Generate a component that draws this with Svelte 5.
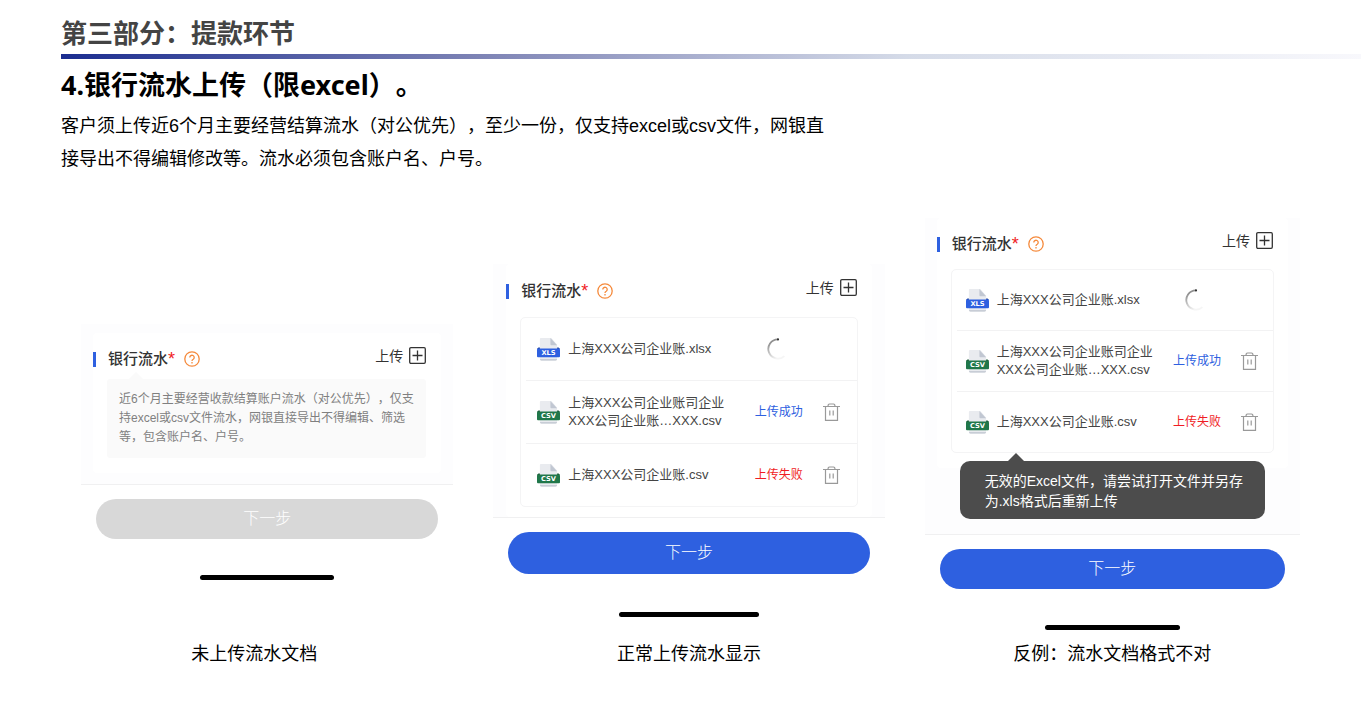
<script lang="ts">
	interface UploadFile {
		name: string;
		type: 'xls' | 'csv';
		status: 'loading' | 'success' | 'fail';
	}

	interface Screen {
		id: string;
		caption: string;
		files: UploadFile[];
		hint?: string;
		error?: string;
	}

	const files: UploadFile[] = [
		{ name: '上海XXX公司企业账.xlsx', type: 'xls', status: 'loading' },
		{ name: '上海XXX公司企业账司企业XXX公司企业账…XXX.csv', type: 'csv', status: 'success' },
		{ name: '上海XXX公司企业账.csv', type: 'csv', status: 'fail' }
	];

	const screens: Screen[] = [
		{
			id: 'empty',
			caption: '未上传流水文档',
			files: [],
			hint: '近6个月主要经营收款结算账户流水（对公优先），仅支持excel或csv文件流水，网银直接导出不得编辑、筛选等，包含账户名、户号。'
		},
		{ id: 'normal', caption: '正常上传流水显示', files },
		{
			id: 'invalid',
			caption: '反例：流水文档格式不对',
			files,
			error: '无效的Excel文件，请尝试打开文件并另存为.xls格式后重新上传'
		}
	];
</script>

{#snippet fileIcon(type: string)}
	<svg class="file-icon" viewBox="0 0 24 24" aria-hidden="true">
		<path d="M4 0h11l6 7v15q0 2-2 2H5q-2 0-2-2V1q0-1 1-1z" fill="#e9ebef" />
		<path d="M14 0l7 7.5h-6q-1 0-1-1z" fill="#c1c7d2" />
		<path d="M3 22q0 1.5 1.5 1.5h15Q21 23.500 21 22z" fill="#c8cdd6" />
		<path d="M1.500 10L0 11.500h3V10zM22.500 10l1.500 1.500h-3V10z" fill={type === 'xls' ? '#1d419f' : '#14532f'} />
		<rect y="11" width="24" height="9" rx="1" fill={type === 'xls' ? '#2e60e0' : '#20774a'} />
		<text x="12" y="18" text-anchor="middle" fill="#fff">{type.toUpperCase()}</text>
	</svg>
{/snippet}

{#snippet spinner(id: string)}
	<svg class="spinner" viewBox="0 0 24 24" role="img" aria-label="上传中">
		<defs>
			<linearGradient id="spin-{id}" x1="0" y1="0" x2="0.500" y2="1">
				<stop offset="0" stop-color="#777" />
				<stop offset="0.500" stop-color="#bbb" />
				<stop offset="1" stop-color="#f5f5f5" />
			</linearGradient>
		</defs>
		<path d="M12 1.500A10.500 10.500 0 1 0 19 19.800" fill="none" stroke="url(#spin-{id})" stroke-width="2" />
		<circle cx="12" cy="1.500" r="1.200" fill="#333" />
	</svg>
{/snippet}

<header>
	<h2>第三部分：提款环节</h2>
</header>

<main>
	<section class="intro">
		<h1>4.银行流水上传（限excel）。</h1>
		<p>
			客户须上传近6个月主要经营结算流水（对公优先），至少一份，仅支持excel或csv文件，网银直<br />接导出不得编辑修改等。流水必须包含账户名、户号。
		</p>
	</section>

	<section class="gallery">
		{#each screens as screen}
			<figure class={screen.id}>
				<div class="screen">
					<div class="card">
						<div class="card-head">
							<div class="title">
								<span class="mark"></span>
								<span>银行流水</span>
								<span class="required">*</span>
								<button class="help" aria-label="说明">
									<svg viewBox="0 0 16 16" fill="none" stroke="#f58a3c">
										<circle cx="8" cy="8" r="7.200" stroke-width="1.300" />
										<path d="M5.800 6.500a2.200 2.200 0 1 1 3.400 1.800q-1.200.7-1.200 1.700" stroke-width="1.300" />
										<path d="M8 11v1.400" stroke-width="1.300" />
									</svg>
								</button>
							</div>
							<button class="upload">
								上传
								<svg viewBox="0 0 17 17" fill="none" stroke="#333" aria-hidden="true">
									<rect x="0.700" y="0.700" width="15.600" height="15.600" rx="1.200" stroke-width="1.300" />
									<path d="M3.500 8.500h10M8.500 3.500v10" stroke-width="1.300" />
								</svg>
							</button>
						</div>

						{#if screen.hint}
							<p class="hint">{screen.hint}</p>
						{/if}

						{#if screen.files.length}
							<ul class="files">
								{#each screen.files as file}
									<li>
										{@render fileIcon(file.type)}
										<span class="name">{file.name}</span>
										<span class="status {file.status}">
											{#if file.status === 'loading'}
												{@render spinner(screen.id)}
											{:else}
												{file.status === 'success' ? '上传成功' : '上传失败'}
											{/if}
										</span>
										{#if file.status !== 'loading'}
											<button class="remove" aria-label="删除">
												<svg viewBox="0 0 17 18" fill="none" stroke="#999" stroke-width="1.200">
													<path d="M0 3.500h17M5 3.500q0-2.500 1.500-2.500h4q1.500 0 1.500 2.500M2.500 3.500v13.800h12V3.500" />
													<path d="M6.800 7.500v5M10.200 7.500v5" />
												</svg>
											</button>
										{/if}
									</li>
								{/each}
							</ul>
						{/if}

						{#if screen.error}
							<div class="tooltip" role="alert">{screen.error}</div>
						{/if}
					</div>

					<div class="footer">
						<button class="next" disabled={!screen.files.length}>下一步</button>
						<div class="home"></div>
					</div>
				</div>
				<figcaption>{screen.caption}</figcaption>
			</figure>
		{/each}
	</section>
</main>

<style>
	:global(body) {
		margin: 0;
		background: #fff;
		color: #000;
		font-family: 'Liberation Sans', 'Noto Sans CJK SC', sans-serif;
		text-spacing-trim: space-all;
	}
	h1,
	h2,
	p,
	ul,
	figure {
		margin: 0;
		padding: 0;
	}
	button {
		padding: 0;
		border: 0;
		background: none;
		font: inherit;
		color: inherit;
		cursor: pointer;
	}
	svg {
		display: block;
	}
	header {
		margin-left: 61px;
		padding-top: 14px;
	}
	header h2 {
		color: #444;
		font-size: 26px;
		font-weight: 700;
		line-height: 40px;
	}
	header::after {
		content: '';
		display: block;
		height: 5px;
		background: linear-gradient(to right, #1b2d90, #7d83b5 32%, #d5dbe8 65%, #f8f8fc);
	}
	.intro {
		padding: 6px 61px 0;
	}
	.intro h1 {
		font-family: 'Noto Sans', 'Noto Sans CJK SC', sans-serif;
		font-size: 27px;
		font-weight: 700;
		line-height: 40px;
	}
	.intro p {
		padding-top: 5px;
		font-size: 18px;
		line-height: 33px;
	}
	.gallery {
		display: grid;
		grid-template-columns: 372fr 391fr 375fr;
		gap: 40px;
		align-items: end;
		padding: 42px 61px 40px 81px;
	}
	.screen {
		background: #fdfdfe;
		color: #333;
	}
	.card {
		position: relative;
		margin: 0 12px;
		padding: 14px 0 15px;
		border-radius: 4px;
		background: #fff;
	}
	.card-head {
		display: flex;
		justify-content: space-between;
		align-items: flex-start;
		padding-right: 15px;
	}
	.title {
		display: flex;
		align-items: center;
		font-size: 15px;
		font-weight: 500;
		line-height: 24px;
	}
	.mark {
		width: 3px;
		height: 15px;
		margin-right: 12px;
		background: #2e60e0;
	}
	.required {
		color: #f01c24;
		font-size: 18px;
	}
	.help {
		margin-left: 9px;
	}
	.help svg {
		width: 16px;
		height: 16px;
	}
	.upload {
		display: flex;
		align-items: center;
		gap: 6px;
		font-size: 14px;
		line-height: 16px;
	}
	.upload svg {
		width: 17px;
		height: 17px;
	}
	.hint {
		position: relative;
		margin: 8px 15px 0 14px;
		padding: 11px 12px;
		border-radius: 3px;
		background: #fafafa;
		color: #808080;
		font-size: 12px;
		line-height: 19px;
	}
	.hint::before {
		content: '';
		position: absolute;
		top: -7px;
		left: 22px;
		border: solid transparent;
		border-width: 0 7px 7px;
		border-bottom-color: #fafafa;
	}
	.files {
		margin: 13px 14px 0;
		border: 1px solid #f4f4f5;
		border-radius: 5px;
		list-style: none;
	}
	.files li {
		display: grid;
		grid-template-columns: 23px minmax(0, 1fr) 60px 17px;
		gap: 8px;
		align-items: center;
		height: 60px;
		margin-left: 5px;
		padding: 0 15px 0 9px;
	}
	.files li + li {
		border-top: 1px solid #f2f2f3;
	}
	.file-icon {
		width: 23px;
		height: 23px;
	}
	.file-icon text {
		font-family: 'DejaVu Sans', sans-serif;
		font-size: 7px;
		font-weight: 700;
	}
	.name {
		color: #444;
		font-size: 13px;
		line-height: 18px;
	}
	.status {
		font-size: 12px;
		line-height: 16px;
		white-space: nowrap;
	}
	.success {
		color: #2e60e0;
	}
	.fail {
		color: #f01c24;
	}
	.spinner {
		width: 22px;
		height: 22px;
		margin-left: 12px;
	}
	.remove svg {
		width: 17px;
		height: 18px;
	}
	.tooltip {
		position: absolute;
		top: 243px;
		left: 23px;
		right: 23px;
		padding: 10px 20px 8px 25px;
		border-radius: 10px;
		background: #4c4c4c;
		color: #fff;
		font-size: 14px;
		line-height: 20px;
	}
	.tooltip::before {
		content: '';
		position: absolute;
		top: -8px;
		left: 48px;
		border: solid transparent;
		border-width: 0 8px 8px;
		border-bottom-color: #4c4c4c;
	}
	.footer {
		padding: 14px 15px 8px;
		border-top: 1px solid #f0f0f1;
		background: #fff;
	}
	.next {
		display: block;
		width: 100%;
		height: 40px;
		border-radius: 21px;
		background: #2e60e0;
		color: #fff;
		font-size: 16px;
		font-weight: 300;
		line-height: 24px;
	}
	.next:disabled {
		background: #d8d8d8;
		cursor: default;
	}
	.home {
		width: 39%;
		height: 5px;
		margin: 36px auto 0;
		border-radius: 3px;
		background: #000;
	}
	figcaption {
		font-size: 18px;
		line-height: 24px;
		text-align: center;
	}

	.empty .screen {
		padding-top: 9px;
	}
	.empty .card {
		margin-bottom: 11px;
	}
	.empty figcaption {
		padding: 54px 26px 0 0;
	}
	.normal .card {
		margin: 0 13px;
		padding: 15px 0 10px;
	}
	.normal .files {
		margin-top: 14px;
	}
	.normal .files li {
		height: 62px;
		padding: 0 17px 0 11px;
	}
	.normal .next {
		height: 42px;
	}
	.normal .home {
		margin-top: 38px;
	}
	.normal figcaption {
		padding-top: 17px;
	}
	.invalid .card {
		margin-bottom: 66px;
	}
	.invalid figcaption {
		padding-top: 4px;
	}
</style>
